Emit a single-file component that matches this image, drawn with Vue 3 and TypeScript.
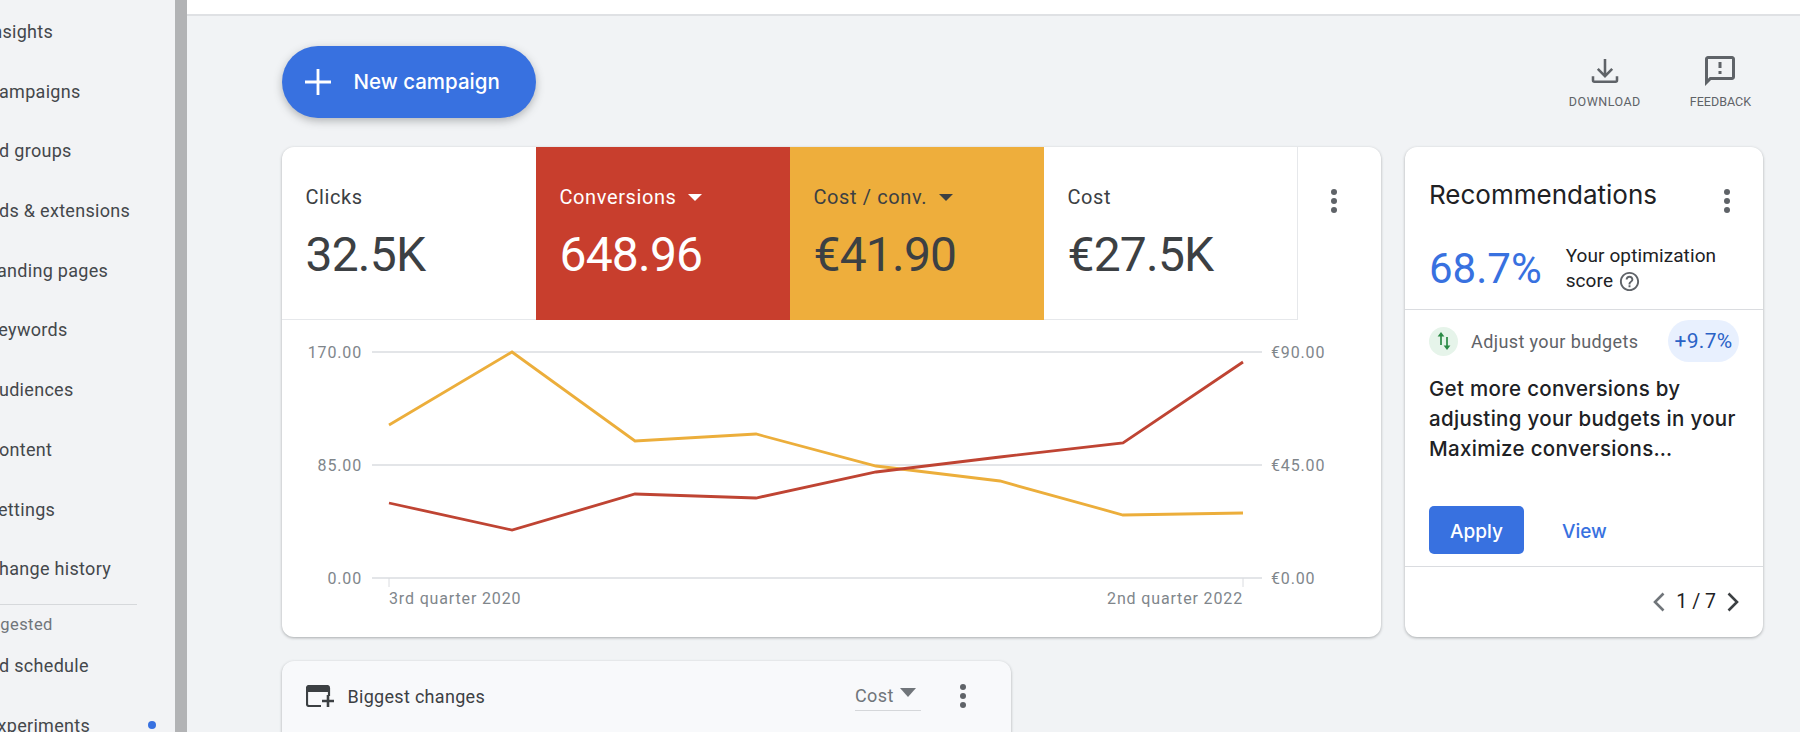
<script setup lang="ts">
interface Metric {
	label: string;
	value: string;
	tone: 'plain' | 'red' | 'yellow';
	arrow: boolean;
}

const navItems = ['Insights', 'Campaigns', 'Ad groups', 'Ads & extensions', 'Landing pages', 'Keywords', 'Audiences', 'Content', 'Settings', 'Change history'];

const metrics: Metric[] = [
	{ label: 'Clicks', value: '32.5K', tone: 'plain', arrow: false },
	{ label: 'Conversions', value: '648.96', tone: 'red', arrow: true },
	{ label: 'Cost / conv.', value: '€41.90', tone: 'yellow', arrow: true },
	{ label: 'Cost', value: '€27.5K', tone: 'plain', arrow: false },
];

const xs = [107, 230, 353, 474, 594, 718, 841, 961];
const yellowYs = [105, 32, 121, 114, 146, 161, 195, 193];
const redYs = [183, 210, 174, 178, 152, 137, 123, 42];

const toPoints = (ys: number[]) => ys.map((y, i) => `${xs[i]},${y}`).join(' ');
const yellowLine = toPoints(yellowYs);
const redLine = toPoints(redYs);

const grid = [
	{ y: 32, left: '170.00', right: '€90.00' },
	{ y: 145, left: '85.00', right: '€45.00' },
	{ y: 258, left: '0.00', right: '€0.00' },
];
</script>

<template>
	<div class="page">
		<aside class="sidebar">
			<div class="nav">
				<div v-for="item in navItems" :key="item" class="nav-item">{{ item }}</div>
				<div class="nav-rule"></div>
				<div class="nav-heading">Suggested</div>
				<div class="nav-item nav-schedule">Ad schedule</div>
				<div class="nav-item nav-exp">
					<span>Experiments</span>
					<i class="nav-dot"></i>
				</div>
			</div>
		</aside>

		<main class="main">
			<div class="topbar"></div>
			<div class="content">
				<div class="toolbar">
					<button class="new-btn">
						<svg class="plus" viewBox="0 0 24 24" width="26" height="26">
							<path d="M12 0v24M0 12h24" stroke="#fff" stroke-width="2.6" fill="none" />
						</svg>
						<span>New campaign</span>
					</button>
					<div class="actions">
						<div class="action">
							<svg viewBox="0 0 24 24" width="36" height="36" fill="none" stroke="#5f6368" stroke-width="1.7">
								<path d="M12 4v11M7.2 10.6 12 15.4l4.8-4.8" />
								<path d="M4 15.5v2.7a1 1 0 0 0 1 1h14a1 1 0 0 0 1-1v-2.7" />
							</svg>
							<span class="wide">DOWNLOAD</span>
						</div>
						<div class="action">
							<svg viewBox="0 0 24 24" width="36" height="36" fill="#5f6368">
								<path d="M20 2H4c-1.1 0-2 .9-2 2v18l4-4h14c1.1 0 2-.9 2-2V4c0-1.1-.9-2-2-2zm0 14H5.17L4 17.17V4h16v12z" />
								<path d="M11 12h2v2h-2zM11 6h2v4h-2z" />
							</svg>
							<span>FEEDBACK</span>
						</div>
					</div>
				</div>

				<div class="cards">
					<section class="card overview">
						<div class="metrics">
							<div v-for="m in metrics" :key="m.label" class="metric" :class="m.tone">
								<div class="metric-label">
									{{ m.label }}
									<i v-if="m.arrow" class="caret"></i>
								</div>
								<div class="metric-value">{{ m.value }}</div>
							</div>
							<svg class="kebab metrics-kebab" viewBox="0 0 12 24" width="12" height="24">
								<circle cx="6" cy="3" r="3" /><circle cx="6" cy="12" r="3" /><circle cx="6" cy="21" r="3" />
							</svg>
						</div>
						<svg class="chart" viewBox="0 0 1099 317" width="1099" height="317">
							<g v-for="g in grid" :key="g.y">
								<line x1="90" x2="980" :y1="g.y" :y2="g.y" stroke="#e3e5e8" stroke-width="2" />
								<text class="tick" x="80" :y="g.y + 6" text-anchor="end">{{ g.left }}</text>
								<text class="tick" x="989" :y="g.y + 6">{{ g.right }}</text>
							</g>
							<line x1="107" x2="107" y1="258" y2="267" stroke="#dadce0" />
							<line x1="961" x2="961" y1="258" y2="267" stroke="#dadce0" />
							<text class="tick" x="107" y="284">3rd quarter 2020</text>
							<text class="tick" x="961" y="284" text-anchor="end">2nd quarter 2022</text>
							<polyline :points="yellowLine" fill="none" stroke="#ecae3b" stroke-width="2.8" />
							<polyline :points="redLine" fill="none" stroke="#bf4433" stroke-width="2.8" />
						</svg>
					</section>

					<section class="card rec">
						<div class="rec-top">
							<div class="rec-head">
								<h2>Recommendations</h2>
								<svg class="kebab rec-kebab" viewBox="0 0 12 24" width="12" height="24">
									<circle cx="6" cy="3" r="3" /><circle cx="6" cy="12" r="3" /><circle cx="6" cy="21" r="3" />
								</svg>
							</div>
							<div class="score">
								<div class="score-num">68.7%</div>
								<div class="score-text">
									Your optimization<br />
									score
									<svg class="help" viewBox="0 0 24 24" width="23" height="23" fill="#5f6368">
										<path d="M11 18h2v-2h-2v2zm1-16C6.48 2 2 6.48 2 12s4.48 10 10 10 10-4.48 10-10S17.52 2 12 2zm0 18c-4.41 0-8-3.59-8-8s3.59-8 8-8 8 3.59 8 8-3.59 8-8 8zm0-14c-2.21 0-4 1.79-4 4h2c0-1.1.9-2 2-2s2 .9 2 2c0 2-3 1.75-3 5h2c0-2.25 3-2.5 3-5 0-2.21-1.79-4-4-4z" />
									</svg>
								</div>
							</div>
						</div>
						<div class="rec-body">
							<div class="rec-row">
								<span class="swap">
									<svg viewBox="0 0 14 18" width="14" height="18">
										<path d="M4 13V3" stroke="#2a8a45" stroke-width="1.7" fill="none" />
										<path d="M4 0 7.4 4.4H.6z" fill="#2a8a45" />
										<path d="M10 5v10" stroke="#2a8a45" stroke-width="1.7" fill="none" />
										<path d="M10 18 6.6 13.6h6.8z" fill="#2a8a45" />
									</svg>
								</span>
								<span class="rec-name">Adjust your budgets</span>
								<span class="badge">+9.7%</span>
							</div>
							<p class="rec-desc">Get more conversions by adjusting your budgets in your Maximize conversions…</p>
							<div class="rec-buttons">
								<button class="apply">Apply</button>
								<a class="view">View</a>
							</div>
						</div>
						<div class="pager">
							<svg viewBox="0 0 12 20" width="12" height="20" fill="none" stroke="#70757a" stroke-width="2.6">
								<path d="M10.5 1.5 2 10l8.5 8.5" />
							</svg>
							<span>1 / 7</span>
							<svg viewBox="0 0 12 20" width="12" height="20" fill="none" stroke="#3c4043" stroke-width="2.6">
								<path d="M1.5 1.5 10 10l-8.5 8.5" />
							</svg>
						</div>
					</section>
				</div>

				<section class="card changes">
					<svg viewBox="0 0 28 22" width="28" height="22" class="changes-icon" fill="none">
						<path d="M15 21H3a2 2 0 0 1-2-2V3a2 2 0 0 1 2-2h18a2 2 0 0 1 2 2v8" stroke="#3c4043" stroke-width="2.2" />
						<path d="M1 1h22v6H1z" fill="#3c4043" />
						<path d="M22 10v12M16 16h12" stroke="#3c4043" stroke-width="2.6" />
					</svg>
					<span class="changes-title">Biggest changes</span>
					<div class="changes-select">
						<span>Cost</span>
						<i class="caret"></i>
					</div>
					<svg class="kebab" viewBox="0 0 12 24" width="12" height="24">
						<circle cx="6" cy="3" r="3" /><circle cx="6" cy="12" r="3" /><circle cx="6" cy="21" r="3" />
					</svg>
				</section>
			</div>
		</main>
	</div>
</template>

<style>
html,
body {
	margin: 0;
	background: #f1f3f5;
}
</style>

<style scoped>
.page {
	display: flex;
	height: 732px;
	overflow: hidden;
	font-family: Roboto, "Liberation Sans", sans-serif;
	color: #3c4043;
	background: #f1f3f5;
}

.sidebar {
	box-sizing: border-box;
	width: 187px;
	flex: none;
	overflow: hidden;
	background: #f2f3f5;
	border-right: 12px solid #b2b3b5;
}

.nav {
	margin-left: -13px;
	width: 177px;
	padding-top: 2px;
}

.nav-item {
	height: 59.7px;
	line-height: 59.7px;
	font-size: 18px;
	letter-spacing: 0.3px;
	white-space: nowrap;
	color: #44474b;
}

.nav-rule {
	height: 1px;
	width: 150px;
	margin-top: 5px;
	background: #d6d8db;
}

.nav-heading {
	margin-top: 10px;
	margin-left: -16px;
	line-height: 20px;
	font-size: 16.5px;
	letter-spacing: 0.4px;
	color: #70757a;
}

.nav-schedule {
	margin-top: 1px;
}

.nav-exp {
	display: flex;
	align-items: center;
}

.nav-dot {
	width: 8px;
	height: 8px;
	margin-left: 58px;
	border-radius: 50%;
	background: #3871e0;
}

.main {
	flex: 1;
	min-width: 0;
	display: flex;
	flex-direction: column;
}

.topbar {
	height: 14px;
	flex: none;
	background: #fff;
	border-bottom: 2px solid #dfe1e4;
}

.content {
	padding: 0 37px 0 94.5px;
}

.toolbar {
	height: 131px;
	display: flex;
	justify-content: space-between;
	align-items: flex-start;
}

.new-btn {
	display: flex;
	align-items: center;
	gap: 23px;
	height: 72px;
	width: 254.5px;
	margin-top: 29.5px;
	padding: 0 0 0 23px;
	border: 0;
	border-radius: 36px;
	background: #3871e0;
	color: #fff;
	font: 500 20.5px Inter, sans-serif;
	box-shadow: 0 3px 8px rgba(60, 64, 67, 0.35);
}

.actions {
	display: flex;
	gap: 49px;
	margin: 37px 12px 0 0;
}

.action {
	display: flex;
	flex-direction: column;
	align-items: center;
	font-size: 12.5px;
	line-height: 16px;
	color: #5f6368;
}

.action span {
	margin-top: 5px;
}

.action .wide {
	letter-spacing: 0.5px;
}

.cards {
	display: flex;
	gap: 24px;
}

.card {
	background: #fff;
	border-radius: 12px;
	box-shadow: 0 1px 3px rgba(60, 64, 67, 0.4);
	overflow: hidden;
}

.overview {
	width: 1099.5px;
	height: 490px;
}

.metrics {
	display: flex;
	height: 173px;
}

.metric {
	box-sizing: border-box;
	width: 254px;
	padding: 36px 0 0 24px;
	border-bottom: 1px solid #e6e8eb;
}

.metric:nth-child(4) {
	border-right: 1px solid #e6e8eb;
}

.metric-label {
	display: flex;
	align-items: center;
	gap: 12px;
	height: 28px;
	font-size: 20px;
	letter-spacing: 0.6px;
}

.metric-value {
	margin-top: 12px;
	font-size: 48px;
	line-height: 64px;
	letter-spacing: -0.8px;
}

.red {
	background: #c83e2d;
	color: #fff;
	border-bottom: 0;
}

.yellow {
	background: #eeae3c;
	color: #3c4043;
	border-bottom: 0;
}

.caret {
	width: 0;
	height: 0;
	border-left: 7px solid transparent;
	border-right: 7px solid transparent;
	border-top: 7px solid currentColor;
}

.kebab {
	flex: none;
	fill: #5f6368;
}

.metrics-kebab {
	margin: 42px 0 0 30px;
}

.chart {
	display: block;
}

.tick {
	font-size: 16px;
	letter-spacing: 0.85px;
	fill: #80868b;
}

.rec {
	width: 358px;
	height: 490px;
	display: flex;
	flex-direction: column;
	color: #202124;
}

.rec-top {
	box-sizing: border-box;
	height: 163px;
	padding: 32px 30px 0 24px;
	border-bottom: 1px solid #dadce0;
}

.rec-head {
	display: flex;
	justify-content: space-between;
	align-items: flex-start;
}

.rec-head h2 {
	margin: 0;
	font-family: Inter, sans-serif;
	font-size: 26px;
	font-weight: 400;
	line-height: 32px;
}

.rec-kebab {
	margin-top: 10px;
}

.score {
	display: flex;
	align-items: center;
	gap: 24px;
	margin-top: 30px;
}

.score-num {
	font-size: 42px;
	color: #3871e0;
}

.score-text {
	font-size: 19px;
	line-height: 25px;
	letter-spacing: 0.1px;
}

.help {
	vertical-align: -6px;
}

.rec-body {
	box-sizing: border-box;
	height: 257px;
	padding: 10px 24px 0;
	border-bottom: 1px solid #dadce0;
}

.rec-row {
	display: flex;
	align-items: center;
	height: 42px;
}

.swap {
	display: flex;
	align-items: center;
	justify-content: center;
	width: 29px;
	height: 29px;
	border-radius: 50%;
	background: #e6f4ea;
}

.rec-name {
	margin-left: 13px;
	font-size: 18px;
	letter-spacing: 0.4px;
	color: #5f6368;
}

.badge {
	box-sizing: border-box;
	width: 71px;
	margin-left: auto;
	height: 42px;
	line-height: 42px;
	text-align: center;
	border-radius: 21px;
	background: #e8f0fe;
	color: #2a62c6;
	font-size: 21px;
	letter-spacing: 0.3px;
	white-space: nowrap;
}

.rec-desc {
	margin: 12px -8px 0 0;
	font-family: Inter, sans-serif;
	font-size: 20.5px;
	font-weight: 500;
	line-height: 30px;
	letter-spacing: 0.3px;
}

.rec-buttons {
	display: flex;
	align-items: center;
	margin-top: 42px;
}

.apply {
	width: 95px;
	height: 48px;
	padding: 2px 0 0;
	border: 0;
	border-radius: 5px;
	background: #3871e0;
	color: #fff;
	font: 500 19px Inter, sans-serif;
}

.view {
	margin: 2px 0 0 38px;
	font-family: Inter, sans-serif;
	font-size: 19px;
	font-weight: 500;
	color: #3871e0;
}

.pager {
	display: flex;
	align-items: center;
	justify-content: flex-end;
	gap: 11px;
	padding: 23px 24px 0 0;
	font-size: 19.5px;
}

.changes {
	display: flex;
	align-items: center;
	width: 729.5px;
	height: 90px;
	margin-top: 24px;
	padding: 0 42px 20px 24px;
	box-sizing: border-box;
	background: #f8f9fb;
	border-radius: 12px 12px 0 0;
}

.changes-title {
	margin-left: 14px;
	font-size: 18px;
	letter-spacing: 0.3px;
}

.changes-select {
	display: flex;
	align-items: center;
	gap: 6px;
	width: 66px;
	height: 28px;
	margin-left: auto;
	margin-right: 36px;
	border-bottom: 1px solid #d5d7da;
	font-size: 18px;
	letter-spacing: 0.4px;
	color: #70757a;
}

.changes-select .caret {
	border-left-width: 8px;
	border-right-width: 8px;
	border-top-width: 9px;
	margin-top: -6px;
}
</style>
